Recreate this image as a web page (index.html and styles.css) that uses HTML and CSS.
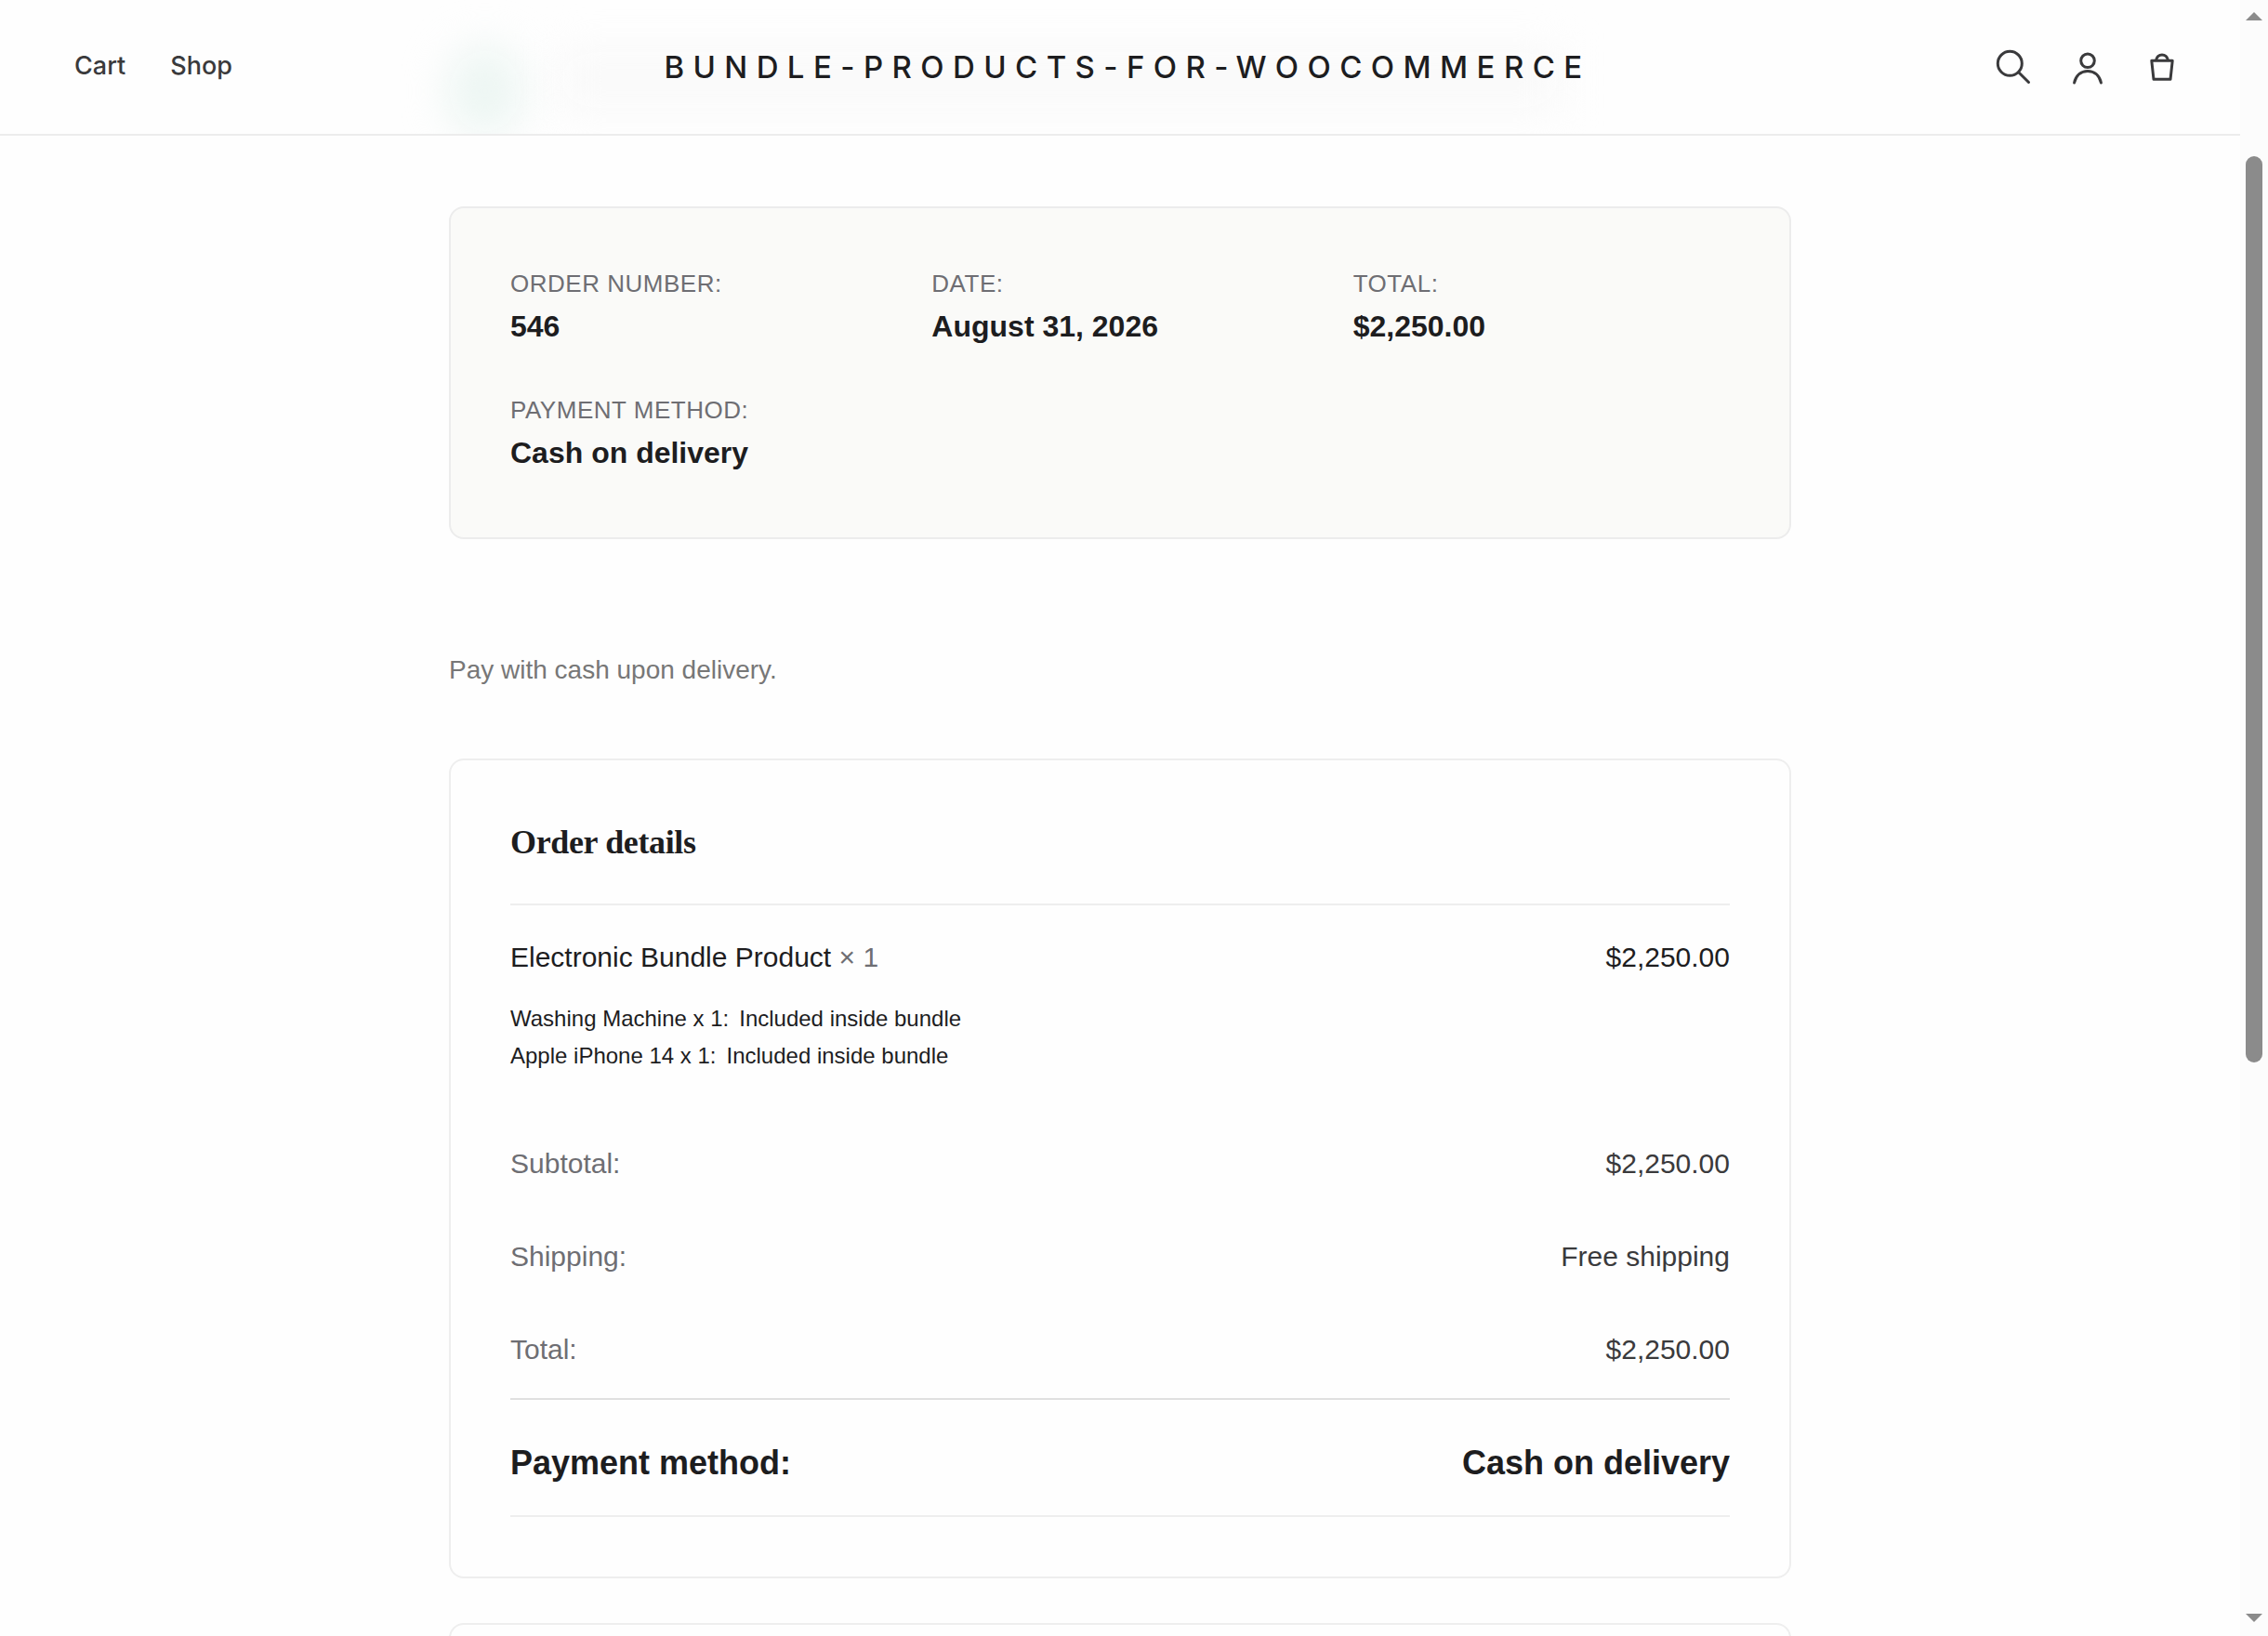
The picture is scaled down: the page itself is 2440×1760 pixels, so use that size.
FILE: index.html
```html
<!DOCTYPE html>
<html lang="en">
<head>
<meta charset="utf-8">
<meta name="viewport" content="width=device-width, initial-scale=1">
<title>Order received</title>
<link rel="stylesheet" href="styles.css">
</head>
<body class="window">
<div class="page">
  <header class="header">
    <div class="header-haze" aria-hidden="true"><span class="haze-icon"></span><span class="haze-title"></span></div>
    <nav class="header-nav" aria-label="Main">
      <a class="nav-link" href="#cart">Cart</a>
      <a class="nav-link" href="#shop">Shop</a>
    </nav>
    <a class="brand" href="#home">BUNDLE-PRODUCTS-FOR-WOOCOMMERCE</a>
    <div class="header-tools">
      <button class="tool" type="button" aria-label="Search">
        <svg class="tool-icon" viewBox="0 0 40 40"><circle cx="16.3" cy="16.3" r="13"/><path d="M25.7 25.7 L36.5 36.5"/></svg>
      </button>
      <a class="tool" href="#account" aria-label="Account">
        <svg class="tool-icon" viewBox="0 0 40 40"><circle cx="20" cy="13.3" r="7.3"/><path d="M5.600 37 C7.500 29 13 24.500 20 24.500 C27 24.500 32.500 29 34.400 37"/></svg>
      </a>
      <a class="tool" href="#bag" aria-label="Bag">
        <svg class="tool-icon" viewBox="0 0 40 40"><path d="M8.800 13.300 H31.200 L29 33.300 H11 Z"/><path d="M13.600 12.500 C14.500 9 17 7 20 7 C23 7 25.500 9 26.400 12.500"/></svg>
      </a>
    </div>
  </header>

  <main class="content">
    <ul class="overview">
      <li class="overview-item">Order number: <strong class="overview-value">546</strong></li>
      <li class="overview-item">Date: <strong class="overview-value">August 31, 2026</strong></li>
      <li class="overview-item">Total: <strong class="overview-value">$2,250.00</strong></li>
      <li class="overview-item">Payment method: <strong class="overview-value">Cash on delivery</strong></li>
    </ul>

    <p class="note">Pay with cash upon delivery.</p>

    <section class="card">
      <h2 class="card-title">Order details</h2>
      <table class="order">
        <tbody>
          <tr class="product">
            <td>
              <span class="product-name">Electronic Bundle Product</span> <span class="quantity">× 1</span>
              <ul class="meta">
                <li>Washing Machine x 1:<span class="meta-value">Included inside bundle</span></li>
                <li>Apple iPhone 14 x 1:<span class="meta-value">Included inside bundle</span></li>
              </ul>
            </td>
            <td class="amount">$2,250.00</td>
          </tr>
        </tbody>
        <tfoot>
          <tr><th scope="row">Subtotal:</th><td class="amount">$2,250.00</td></tr>
          <tr><th scope="row">Shipping:</th><td class="amount">Free shipping</td></tr>
          <tr><th scope="row">Total:</th><td class="amount">$2,250.00</td></tr>
          <tr class="payment"><th scope="row">Payment method:</th><td class="amount">Cash on delivery</td></tr>
        </tfoot>
      </table>
    </section>

    <section class="card"></section>
  </main>
</div>

<div class="scrollbar" aria-hidden="true">
  <svg class="scroll-arrow" viewBox="0 0 18 9"><path d="M9 0 L18 9 H0 Z"/></svg>
  <div class="scroll-track"><div class="scroll-thumb"></div></div>
  <svg class="scroll-arrow" viewBox="0 0 18 9"><path d="M0 0 H18 L9 9 Z"/></svg>
</div>
</body>
</html>
```
FILE: styles.css
```css
* {
  box-sizing: border-box;
}

.window {
  margin: 0;
  height: 100vh;
  overflow: hidden;
  display: grid;
  grid-template-columns: minmax(0, 1fr) 30px;
  background: #fefefe;
  color: #1d1d1f;
  font-family: "Liberation Sans", Arial, sans-serif;
  font-size: 30px;
  line-height: 48px;
}

.page {
  height: 100vh;
  overflow: hidden;
}

/* Header */

.header {
  position: relative;
  display: grid;
  grid-template-columns: 1fr auto 1fr;
  align-items: center;
  height: 146px;
  padding: 0 64px 0 80px;
  border-bottom: 2px solid #ececec;
  font-family: Inter, sans-serif;
}

.header-haze {
  position: absolute;
  inset: 0;
  overflow: hidden;
}

.haze-icon,
.haze-title {
  position: absolute;
  filter: blur(22px);
}

.haze-icon {
  left: 480px;
  top: 48px;
  width: 84px;
  height: 100px;
  border-radius: 50%;
  background: #edf6f3;
}

.haze-title {
  left: 600px;
  right: 730px;
  top: 56px;
  height: 60px;
  background: #f9f9f9;
}

.header-nav {
  position: relative;
  display: flex;
  gap: 48px;
  padding-bottom: 2px;
}

.nav-link {
  color: #3a3a3c;
  font-size: 27px;
  font-weight: 500;
  text-decoration: none;
}

.brand {
  position: relative;
  color: #1d1d1f;
  font-size: 33px;
  font-weight: 500;
  letter-spacing: 0.285em;
  text-decoration: none;
  white-space: nowrap;
}

.header-tools {
  position: relative;
  display: flex;
  justify-content: flex-end;
  gap: 40px;
}

.tool {
  display: flex;
  padding: 0;
  border: 0;
  background: none;
  color: #3a3a3c;
}

.tool-icon {
  width: 40px;
  height: 40px;
  fill: none;
  stroke: currentColor;
  stroke-width: 3;
  stroke-linecap: round;
  stroke-linejoin: round;
}

/* Content */

.content {
  max-width: 1444px;
  margin: 0 auto;
  padding-top: 76px;
}

.overview {
  display: grid;
  grid-template-columns: repeat(3, 1fr);
  gap: 46px 48px;
  margin: 0;
  padding: 64px;
  border: 2px solid #ececec;
  border-radius: 16px;
  background: #fafaf8;
  list-style: none;
}

.overview-item {
  color: #6e6e73;
  font-size: 26px;
  line-height: 34px;
  letter-spacing: 0.02em;
  text-transform: uppercase;
}

.overview-value {
  display: block;
  margin-top: 2px;
  color: #1d1d1f;
  font-size: 32px;
  line-height: 54px;
  letter-spacing: normal;
  text-transform: none;
}

.note {
  margin: 117px 0 71px;
  color: #777777;
  font-size: 28px;
}

.card {
  min-height: 200px;
  margin-bottom: 48px;
  padding: 64px;
  border: 2px solid #eeeeee;
  border-radius: 16px;
}

.card-title {
  margin: 0;
  padding-bottom: 42px;
  border-bottom: 2px solid #eeeeee;
  font-family: "Liberation Serif", "Times New Roman", serif;
  font-size: 36px;
  font-weight: 700;
  letter-spacing: -0.01em;
}

.order {
  width: 100%;
  border-collapse: separate;
  border-spacing: 0;
}

.order th,
.order td {
  padding: 24px 0 28px;
  text-align: left;
  vertical-align: top;
  font-weight: 400;
}

.order th {
  color: #6e6e73;
}

.order td {
  color: #3a3a3c;
}

.order .amount {
  text-align: right;
}

.order .product td {
  padding: 32px 0 48px;
  color: #1d1d1f;
}

.quantity {
  color: #6e6e73;
}

.meta {
  margin: 22px 0 0;
  padding: 0;
  list-style: none;
  font-size: 24px;
  line-height: 40px;
}

.meta-value {
  margin-left: 11px;
}

.order .payment th,
.order .payment td {
  padding: 41px 0 29px;
  border-top: 2px solid #e0e0e0;
  border-bottom: 2px solid #eeeeee;
  color: #1d1d1f;
  font-size: 36px;
  font-weight: 700;
  line-height: 54px;
}

/* Scrollbar */

.scrollbar {
  display: flex;
  flex-direction: column;
  height: 100vh;
  padding: 13px 6px 15px;
  background: #fcfcfc;
}

.scroll-arrow {
  width: 18px;
  height: 9px;
  fill: #8b8b8b;
}

.scroll-track {
  flex: 1;
  padding: 146px 0 0;
}

.scroll-thumb {
  height: 62.2%;
  border-radius: 9px;
  background: #8b8b8b;
}
```
